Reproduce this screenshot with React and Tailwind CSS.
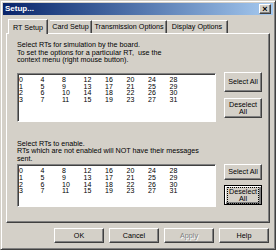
import React from "react";

const raised =
  "border border-t-white border-l-white border-r-[#404040] border-b-[#404040] shadow-[inset_-1px_-1px_0_#808080]";
const sunken =
  "border border-t-[#808080] border-l-[#808080] border-r-white border-b-white shadow-[inset_1px_1px_0_#404040]";

function Btn({ children, className = "", disabled = false, focused = false }) {
  return (
    <div
      className={`flex items-center justify-center bg-[#d4d0c8] text-center leading-[7.5px] whitespace-nowrap ${
        focused
          ? "border border-black shadow-[inset_1px_1px_0_white,inset_-2px_-2px_0_#808080]"
          : raised
      } ${disabled ? "text-[#808080] [text-shadow:1px_1px_0_white]" : "text-black"} ${className}`}
    >
      {focused ? (
        <div className="border border-dotted border-black px-[1px]">{children}</div>
      ) : (
        children
      )}
    </div>
  );
}

function ListBox({ className }) {
  const cols = [0, 1, 2, 3, 4, 5, 6, 7];
  const rows = [0, 1, 2, 3];
  return (
    <div className={`bg-white ${sunken} pl-[1px] pt-[3px] ${className}`}>
      <div className="grid grid-cols-[repeat(8,21.5px)] leading-[6.7px] text-[7px]">
        {rows.map((r) =>
          cols.map((c) => (
            <div key={`${r}-${c}`} className="h-[6.7px]">
              {r + 4 * c}
            </div>
          ))
        )}
      </div>
    </div>
  );
}

const tabOff =
  "h-[13px] whitespace-nowrap border-t border-t-white border-r border-r-[#404040] shadow-[inset_-1px_0_0_#808080] flex justify-center pt-[2px] leading-[8px]";

export default function App() {
  return (
    <div className="w-[276px] h-[250px] bg-[#d4d0c8] font-['Liberation_Sans',Arial,sans-serif] text-[7.2px] text-black border border-t-[#d4d0c8] border-l-[#d4d0c8] border-r-[#404040] border-b-[#404040] shadow-[inset_1px_1px_0_white,inset_-1px_-1px_0_#808080] p-[2px] flex flex-col">
      {/* Title bar */}
      <div className="h-[12px] bg-gradient-to-r from-[#0a246a] to-[#a6caf0] flex items-center justify-between pl-[2px] pr-[2px]">
        <span className="text-white font-bold text-[8px] leading-[10px]">Setup...</span>
        <div className={`w-[12px] h-[10px] bg-[#d4d0c8] ${raised} flex items-center justify-center text-[9px] leading-[8px] font-bold`}>
          ×
        </div>
      </div>

      {/* Tabs */}
      <div className="mt-[4px] ml-[5px] flex items-end h-[14px]">
        <div className="h-[15px] mb-[-1px] z-10 whitespace-nowrap bg-[#d4d0c8] border-t border-l border-t-white border-l-white border-r border-r-[#404040] shadow-[inset_-1px_0_0_#808080] w-[40px] flex justify-center pt-[4px] leading-[8px]">
          RT Setup
        </div>
        <div className={`${tabOff} ml-[2px] w-[42px]`}>Card Setup</div>
        <div className={`${tabOff} w-[75px]`}>Transmission Options</div>
        <div className={`${tabOff} w-[61px]`}>Display Options</div>
      </div>

      {/* Panel */}
      <div className={`mx-[3px] h-[190px] ${raised} pl-[10px] pt-[7px] flex flex-col`}>
        <div className="leading-[7.7px]">
          <div>Select RTs for simulation by the board.</div>
          <div>To set the options for a particular RT,&nbsp; use the</div>
          <div>context menu (right mouse button).</div>
        </div>
        <div className="mt-[9px] flex items-start">
          <ListBox className="w-[199px] h-[49px]" />
          <div className="ml-[8px] mt-[-1px] flex flex-col gap-[6px]">
            <Btn className="w-[38px] h-[20px]">Select All</Btn>
            <Btn className="w-[38px] h-[20px]">
              <div>
                Deselect
                <br />
                All
              </div>
            </Btn>
          </div>
        </div>

        <div className="mt-[17.5px] leading-[7.7px]">
          <div>Select RTs to enable.</div>
          <div>RTs which are not enabled will NOT have their messages</div>
          <div>sent.</div>
        </div>
        <div className="mt-[1.5px] flex items-start">
          <ListBox className="w-[199px] h-[43px]" />
          <div className="ml-[8px] flex flex-col gap-[5px]">
            <Btn className="w-[38px] h-[16px]">Select All</Btn>
            <Btn className="w-[38px] h-[20px]" focused>
              <div>
                Deselect
                <br />
                All
              </div>
            </Btn>
          </div>
        </div>
      </div>

      {/* Bottom buttons */}
      <div className="mt-[5px] flex justify-end gap-[5px] pr-[4px]">
        <Btn className="w-[50px] h-[15px]">OK</Btn>
        <Btn className="w-[50px] h-[15px]">Cancel</Btn>
        <Btn className="w-[50px] h-[15px]" disabled>
          Apply
        </Btn>
        <Btn className="w-[50px] h-[15px]">Help</Btn>
      </div>
    </div>
  );
}
